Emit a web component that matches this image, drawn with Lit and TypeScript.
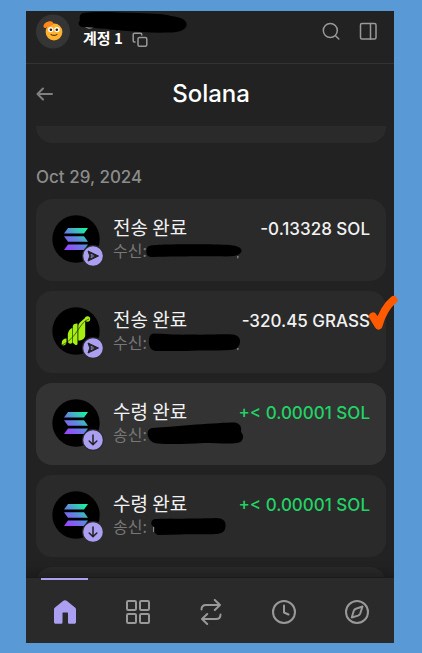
import { LitElement, html, svg, css, nothing, TemplateResult, SVGTemplateResult } from "lit";
import { customElement, property } from "lit/decorators.js";

type Token = "sol" | "grass";
type Kind = "sent" | "received";

interface Transfer {
  kind: Kind;
  token: Token;
  amount: string;
  ink: SVGTemplateResult;
  hovered?: boolean;
  ticked?: boolean;
}

const transfers: Transfer[] = [
  {
    kind: "sent",
    token: "sol",
    amount: "-0.13328 SOL",
    ink: svg`<path d="M5 7.5 C14 6 68 6 84 7 C92 8 96 10 95.5 13 C95 17 88 18.5 80 18.5 C60 18 26 18.5 6 19 C1 19 0 16 0.500 12 C1 9 2 8 5 7.500Z"/><path d="M91 18h1.500v1.500l-1 1.500" fill="#888"/>`,
  },
  {
    kind: "sent",
    token: "grass",
    amount: "-320.45 GRASS",
    ticked: true,
    ink: svg`<path d="M8 3.500 C22 4 30 5 44 4.500 C60 5 76 4 86 4.500 C92 5 94.500 8 94 12 C93.500 17 90 20 84 20 C66 21 56 20 40 21 L10 21 C5 20.500 3 17 3 12 C3 7 4 3.500 8 3.500Z"/><path d="M91 18h1.500v1.500l-1 1" fill="#888"/>`,
  },
  {
    kind: "received",
    token: "sol",
    amount: "+< 0.00001 SOL",
    hovered: true,
    ink: svg`<path d="M6 6 C20 5 34 4 50 2.500 C66 1.500 80 0.500 88 0.500 C94 1 96 5 95 10 C98 13 98 17 94.500 20 C88 22.500 74 21 58 21 C40 22 24 22.500 12 21.500 C6 21.500 2 17 1.500 12 C1.500 9 3 6.500 6 6Z"/>`,
  },
  {
    kind: "received",
    token: "sol",
    amount: "+< 0.00001 SOL",
    ink: svg`<path d="M7.500 12v6" stroke="#888"/><path d="M9 5 C24 4.500 40 5 70 4 C77 4 80 7 79.500 12 C79.500 17 77 19.500 70 20 C58 21 46 19.500 34 20.500 L13 21 C8 20.500 8 17 9 13.500 C4 12 4 6 9 5Z"/>`,
  },
];

const tokenLogos: Record<Token, SVGTemplateResult> = {
  sol: svg`
    <defs>
      <linearGradient id="g" gradientUnits="userSpaceOnUse" x1="14" y1="36" x2="34" y2="12">
        <stop offset="0.080" stop-color="#9945ff"/>
        <stop offset="0.500" stop-color="#5f87e0"/>
        <stop offset="0.920" stop-color="#19f0a0"/>
      </linearGradient>
    </defs>
    <path fill="url(#g)" d="M16 13H36L32 18.500H12ZM12 21.200H32L36 26.700H16ZM16 29.500H36L32 35H12Z"/>`,
  grass: svg`
    <g fill="#a6f00f">
      <path d="M10 34.500C10 33 13 31 14.500 31.500V35.500C14 38.500 10 39.500 9.600 37Z"/>
      <path d="M15.800 27C16.500 22.500 20.300 20.500 20.300 21V35.500C19 37.500 16 37 15.800 34Z"/>
      <path d="M20.800 19C21.500 16.500 25.500 16 25.500 17V37C25 39 22.500 38 20.800 35.500Z"/>
      <path d="M26.300 19C26.500 15.500 31 13 33.200 11V29C32 33 28 34 26.300 33.500Z"/>
      <circle cx="35.500" cy="12" r="2.700"/>
    </g>
    <path d="M10 38C17 35 22 29 26 23S32 14 37 12" fill="none" stroke="#1c2b00" stroke-width="0.700"/>`,
};

const badges: Record<Kind, SVGTemplateResult> = {
  sent: svg`<path d="M6 6L16.500 11L6 16L7.800 11Z" fill="#222" stroke="#222" stroke-width="1" stroke-linejoin="round"/><path d="M8.800 9L12.500 10.600H8.800ZM8.800 13L12.500 11.400H8.800Z" fill="#ab9ff2"/>`,
  received: svg`<path d="M11 6V15.500M7.200 12L11 15.800L14.800 12" fill="none" stroke="#222" stroke-width="1.500" stroke-linecap="round" stroke-linejoin="round"/>`,
};

@customElement("transfer-row")
class TransferRow extends LitElement {
  @property({ attribute: false }) transfer!: Transfer;

  static styles = css`
    :host { display: block; position: relative; }
    .card {
      display: flex;
      align-items: flex-start;
      box-sizing: border-box;
      width: 100%;
      height: 82px;
      padding: 16px;
      border: 0;
      border-radius: 16px;
      background: #2a2a2a;
      color: #f2f2f2;
      text-align: left;
      font: 500 17px/24px Inter, "Noto Sans CJK KR", sans-serif;
    }
    .hovered { background: #333; }
    .token { position: relative; flex: none; width: 48px; height: 48px; }
    .logo { display: block; width: 48px; height: 48px; }
    .badge { position: absolute; right: -4px; bottom: -4px; width: 22px; height: 22px; }
    .words { display: flex; flex-direction: column; flex: 1; margin-left: 13px; }
    .title { font: 400 19px/24px "Noto Sans CJK KR", sans-serif; }
    .party { position: relative; color: #777; font: 400 16px/22px "Noto Sans CJK KR", sans-serif; }
    .ink { position: absolute; left: 33px; top: -1px; width: 98px; height: 24px; }
    .amount { padding-top: 2px; white-space: nowrap; }
    .received { color: #21d366; }
    .tick { position: absolute; right: -12px; top: 4px; width: 30px; height: 37px; }
  `;

  render() {
    const t = this.transfer;
    const received = t.kind === "received";
    return html`
      <button class="card ${t.hovered ? "hovered" : ""}">
        <span class="token">
          <svg class="logo" viewBox="0 0 48 48"><circle cx="24" cy="24" r="23.700"/>${tokenLogos[t.token]}</svg>
          <svg class="badge" viewBox="0 0 22 22">
            <circle cx="11" cy="11" r="11" fill="#2a2a2a"/>
            <circle cx="11" cy="11" r="9.800" fill="#ab9ff2"/>
            ${badges[t.kind]}
          </svg>
        </span>
        <span class="words">
          <span class="title">${received ? "수령 완료" : "전송 완료"}</span>
          <span class="party">${received ? "송신:" : "수신:"}<svg class="ink" viewBox="0 0 98 24">${t.ink}</svg></span>
        </span>
        <span class="amount ${received ? "received" : ""}">${t.amount}</span>
      </button>
      ${t.ticked
        ? html`<svg class="tick" viewBox="0 0 30 37"><path d="M5 21.500L10.500 30.500C13 22 18 11 25.500 5" fill="none" stroke="#ff5a00" stroke-width="8" stroke-linecap="round" stroke-linejoin="round"/></svg>`
        : nothing}
    `;
  }
}

const tabs: { label: string; icon: TemplateResult }[] = [
  {
    label: "홈",
    icon: html`<svg class="tab-icon" viewBox="0 0 26 26"><path d="M2 10.500C2 9.500 2.500 8.800 3.300 8.200L11 2C12.200 1.100 13.800 1.100 15 2L22.700 8.200C23.500 8.800 24 9.500 24 10.500V23C24 24.200 23.400 24.800 22.200 24.800H17.500C16.500 24.800 16 24.300 16 23.300V14.500C16 13.800 15.700 13.500 15 13.500H11.500C10.800 13.500 10.500 13.800 10.500 14.500V23.300C10.500 24.300 10 24.800 9 24.800H3.800C2.600 24.800 2 24.200 2 23Z" fill="currentColor"/></svg>`,
  },
  {
    label: "컬렉션",
    icon: html`<svg class="tab-icon" viewBox="0 0 26 26"><g class="line"><rect x="2" y="2" width="9" height="9" rx="1.200"/><rect x="15" y="2" width="9" height="9" rx="1.200"/><rect x="2" y="15" width="9" height="9" rx="1.200"/><rect x="15" y="15" width="9" height="9" rx="1.200"/></g></svg>`,
  },
  {
    label: "스왑",
    icon: html`<svg class="tab-icon" viewBox="0 0 26 26"><g class="line"><path d="M3.500 10.500C3.500 7.500 5 6 8 6H22M16.800 1L22 6L16.800 11"/><path d="M22.500 15.500C22.500 18.500 21 20 18 20H4M9.200 15L4 20L9.200 25"/></g></svg>`,
  },
  {
    label: "활동",
    icon: html`<svg class="tab-icon" viewBox="0 0 26 26"><g class="line"><circle cx="13" cy="13" r="11"/><path d="M13 6.500V13.500L17.500 15.500"/></g></svg>`,
  },
  {
    label: "탐색",
    icon: html`<svg class="tab-icon" viewBox="0 0 26 26"><g class="line"><circle cx="13" cy="13" r="11"/><path d="M18.500 7.500L16.300 14.300C15.800 15.600 15.200 16.200 14 16.600L7.800 18.500L9.700 12C10.100 10.800 10.900 10.200 12 9.800Z"/></g></svg>`,
  },
];

@customElement("app-root")
class AppRoot extends LitElement {
  static styles = css`
    :host {
      display: block;
      box-sizing: border-box;
      height: 100vh;
      padding: 11px 28px 10px 26px;
      background: #5999d6;
      font-family: Inter, "Noto Sans CJK KR", sans-serif;
    }
    button { margin: 0; padding: 0; border: 0; background: none; color: inherit; font: inherit; }
    svg { display: block; }
    .wallet { display: flex; flex-direction: column; height: 100%; background: #222; color: #fff; }
    .account-bar {
      display: flex;
      align-items: flex-start;
      flex: none;
      box-sizing: border-box;
      height: 53px;
      padding: 3px 16px 0 10px;
      border-bottom: 1px solid #333;
    }
    .avatar { width: 34px; height: 35px; }
    .account { position: relative; display: flex; flex: 1; align-items: center; gap: 9px; margin: 13px 0 0 13px; }
    .account-name { font: 700 15px/22px "Noto Sans CJK KR", sans-serif; }
    .copy-icon { width: 16px; height: 16px; margin-top: 4px; }
    .name-ink { position: absolute; left: -6px; top: -16px; width: 112px; height: 24px; }
    .tools { display: flex; gap: 17px; padding-top: 7px; }
    .tool-icon { width: 20px; height: 20px; }
    .line { fill: none; stroke: currentColor; stroke-width: 2px; stroke-linecap: round; stroke-linejoin: round; }
    .thin { fill: none; stroke: #999; stroke-width: 1.5px; stroke-linecap: round; stroke-linejoin: round; }
    .title-bar {
      display: grid;
      grid-template-columns: 20px 1fr 20px;
      align-items: center;
      box-sizing: border-box;
      flex: none;
      height: 62px;
      padding: 0 8px 2px 10px;
    }
    .back { color: #808080; }
    .back-icon { width: 20px; height: 20px; }
    .heading { margin: 0; text-align: center; font: 500 24px/30px Inter, sans-serif; }
    .history { flex: 1; min-height: 0; padding: 0 8px 0 10px; overflow-x: visible; overflow-y: clip; }
    .card-end { height: 17px; border-radius: 0 0 16px 16px; background: #2a2a2a; }
    .date { margin: 0; padding: 22px 0 10px; color: #8c8c8c; font: 500 17px/24px Inter, sans-serif; }
    .rows { display: flex; flex-direction: column; gap: 10px; margin: 0; padding: 0; list-style: none; }
    .next-card { height: 82px; border-radius: 16px; background: #2a2a2a; }
    .tabs {
      position: relative;
      display: flex;
      flex: none;
      height: 65px;
      padding-right: 1px;
      padding-left: 2px;
      border-top: 1px solid #1a1a1a;
      background: #2a2a2a;
      box-shadow: 0 -5px 10px rgba(0, 0, 0, 0.25);
      clip-path: inset(-20px 0 0 0);
    }
    .tab { position: relative; display: flex; flex: 1; align-items: center; justify-content: center; color: #999; }
    .tab-icon { width: 26px; height: 26px; margin-top: 2px; }
    .active { color: #ab9ff2; }
    .active::before { content: ""; position: absolute; left: 13px; right: 13px; top: 0; height: 2px; background: #ab9ff2; }
  `;

  render() {
    return html`
      <main class="wallet">
        <header class="account-bar">
          <svg class="avatar" viewBox="0 0 34 35">
            <circle cx="17" cy="17.500" r="17" fill="#353535"/>
            <circle cx="18" cy="18" r="8.400" fill="#ffb22e"/>
            <path d="M7.500 12.500C7 9 13 6.500 15.500 7.500C17.500 8.500 18 10 17 11L9.500 14C8.500 14 7.700 13.500 7.500 12.500Z" fill="#ff861a"/>
            <circle cx="14.700" cy="15.600" r="2.700" fill="#fff"/>
            <circle cx="21" cy="15.600" r="2.700" fill="#fff"/>
            <circle cx="14.900" cy="15.700" r="1.300" fill="#321b10"/>
            <circle cx="20.800" cy="15.700" r="1.300" fill="#321b10"/>
            <path d="M15 20.300C16.500 21.700 19.500 21.700 21 20.300" fill="none" stroke="#6b3a0c" stroke-width="1.100" stroke-linecap="round"/>
          </svg>
          <div class="account">
            <span class="account-name">계정 1</span>
            <button aria-label="복사">
              <svg class="copy-icon" viewBox="0 0 16 16"><g class="thin"><rect x="6" y="5.500" width="8.800" height="8.800" rx="1.500"/><path d="M3 10H2.300C1.500 10 1.200 9.500 1.200 8.800V2.500C1.200 1.700 1.700 1.200 2.500 1.200H8.500C9.300 1.200 9.800 1.700 9.800 2.500V3"/></g></svg>
            </button>
            <svg class="name-ink" viewBox="0 0 112 24">
              <path d="M8 15C10 17.500 14 17.500 17 15.500" fill="none" stroke="#999" stroke-width="1.500"/>
              <path d="M6 2C20 0 40 1.500 60 2C76 2.500 88 3 94 5C104 6 110 9 109.700 14C109 19 102 21.500 92 21.500C76 22 60 21 44 19.500C30 18 16 16.500 5 16C1 15 1 11 3 9.500C2 6 3 3 6 2Z"/>
            </svg>
          </div>
          <div class="tools">
            <button aria-label="검색">
              <svg class="tool-icon" viewBox="0 0 20 20"><g class="thin"><circle cx="9.300" cy="9.500" r="7"/><path d="M14.500 14.700L17.800 18"/></g></svg>
            </button>
            <button aria-label="사이드 패널">
              <svg class="tool-icon" viewBox="0 0 20 20"><g class="thin"><rect x="2.500" y="2.500" width="15.500" height="15.500" rx="1.500"/><path d="M12.500 2.500V18"/></g></svg>
            </button>
          </div>
        </header>
        <div class="title-bar">
          <button class="back" aria-label="뒤로">
            <svg class="back-icon" viewBox="0 0 20 20"><path class="line" d="M16 10H2M7 4.500L1.500 10L7 15.500"/></svg>
          </button>
          <h1 class="heading">Solana</h1>
        </div>
        <section class="history">
          <div class="card-end"></div>
          <h2 class="date">Oct 29, 2024</h2>
          <ul class="rows">
            ${transfers.map((t) => html`<li><transfer-row .transfer=${t}></transfer-row></li>`)}
            <li class="next-card"></li>
          </ul>
        </section>
        <nav class="tabs">
          ${tabs.map((tab, i) => html`<button class="tab ${i === 0 ? "active" : ""}" aria-label=${tab.label}>${tab.icon}</button>`)}
        </nav>
      </main>
    `;
  }
}
